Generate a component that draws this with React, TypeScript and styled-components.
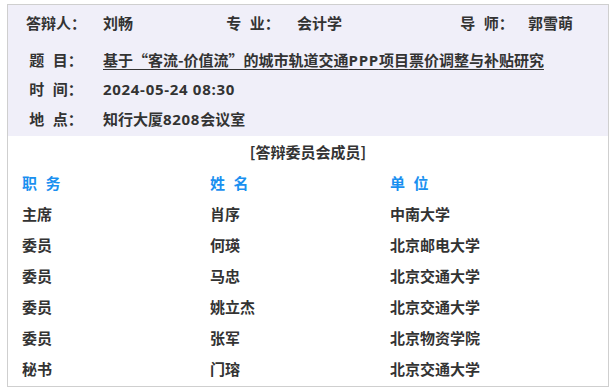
import React from 'react';
import styled, { createGlobalStyle } from 'styled-components';

const GlobalStyle = createGlobalStyle`
  html, body {
    margin: 0;
    padding: 0;
    background: #fff;
  }
  body {
    font-family: "Noto Sans CJK SC", "Noto Sans", sans-serif;
    color: #333;
  }
`;

const Page = styled.div`
  padding: 4px 7px;
`;

const Card = styled.div`
  width: 600px;
  border: 1px solid #cfcfcf;
  background: #fff;
`;

const Info = styled.div`
  background: #f0eff9;
  padding: 2px 0 2px 8px;
`;

const InfoRow = styled.div<{ $h?: number; $gap?: number }>`
  display: flex;
  align-items: center;
  height: ${(p) => p.$h ?? 30}px;
  margin-bottom: ${(p) => p.$gap ?? 0}px;
  font-size: 15px;
  font-weight: 700;
`;

const Label = styled.div`
  width: 80px;
  flex: none;
  text-align: center;
  white-space: pre;
  word-spacing: 5px;
`;

const Value = styled.div<{ $w?: number; $ml?: number }>`
  flex: ${(p) => (p.$w ? 'none' : '1')};
  width: ${(p) => (p.$w ? `${p.$w}px` : 'auto')};
  margin-left: ${(p) => p.$ml ?? 7}px;
  white-space: nowrap;
`;

const Latin = styled.span`
  font-family: "Open Sans", sans-serif;
  letter-spacing: 0.7px;
`;

const Topic = styled.span`
  text-decoration: underline;
  text-underline-offset: 3px;
`;

const Caption = styled.div`
  height: 31px;
  display: flex;
  align-items: center;
  justify-content: center;
  font-size: 15px;
  font-weight: 700;
`;

const Table = styled.div`
  padding: 0 0 2px 14px;
`;

const Row = styled.div<{ $head?: boolean }>`
  display: grid;
  grid-template-columns: 188px 180px 1fr;
  height: 31px;
  align-items: center;
  font-size: 15px;
  font-weight: 700;
  color: ${(p) => (p.$head ? '#1a90f0' : '#333')};
  white-space: pre;
  word-spacing: ${(p) => (p.$head ? '5px' : '0')};
`;

const members = [
  ['主席', '肖序', '中南大学'],
  ['委员', '何瑛', '北京邮电大学'],
  ['委员', '马忠', '北京交通大学'],
  ['委员', '姚立杰', '北京交通大学'],
  ['委员', '张军', '北京物资学院'],
  ['秘书', '门瑢', '北京交通大学'],
];

const App: React.FC = () => (
  <Page>
    <GlobalStyle />
    <Card>
      <Info>
        <InfoRow $gap={7}>
          <Label>答辩人：</Label>
          <Value $w={110}>刘畅</Value>
          <Label>专 业：</Label>
          <Value $w={150} $ml={4}>会计学</Value>
          <Label>导 师：</Label>
          <Value $ml={1}>郭雪萌</Value>
        </InfoRow>
        <InfoRow>
          <Label>题 目：</Label>
          <Value>
            <Topic>
              基于“客流-价值流”的城市轨道交通<Latin>PPP</Latin>项目票价调整与补贴研究
            </Topic>
          </Value>
        </InfoRow>
        <InfoRow $h={29}>
          <Label>时 间：</Label>
          <Value>
            <Latin>2024-05-24 08:30</Latin>
          </Value>
        </InfoRow>
        <InfoRow $h={31}>
          <Label>地 点：</Label>
          <Value>
            知行大厦<Latin>8208</Latin>会议室
          </Value>
        </InfoRow>
      </Info>
      <Caption>[答辩委员会成员]</Caption>
      <Table>
        <Row $head>
          <span>职 务</span>
          <span>姓 名</span>
          <span>单 位</span>
        </Row>
        {members.map((m, i) => (
          <Row key={i}>
            <span>{m[0]}</span>
            <span>{m[1]}</span>
            <span>{m[2]}</span>
          </Row>
        ))}
      </Table>
    </Card>
  </Page>
);

export default App;
